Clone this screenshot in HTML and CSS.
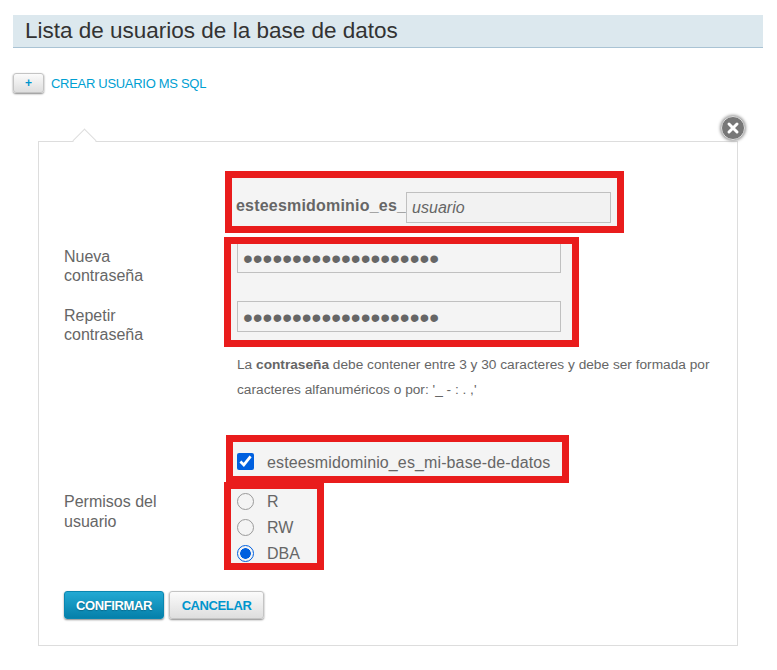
FILE: index.html
```html
<!DOCTYPE html>
<html lang="es">
<head>
    <meta charset="UTF-8">
    <meta name="viewport" content="width=device-width, initial-scale=1.0">
    <title>Lista de usuarios de la base de datos</title>
    <link rel="stylesheet" href="styles.css">
</head>
<body>
    <!-- Title bar -->
    <header class="page-title">
        <h1>Lista de usuarios de la base de datos</h1>
    </header>

    <!-- Create user link -->
    <div class="create-row">
        <button class="btn-add" type="button">+</button>
        <a class="create-link" href="#">CREAR USUARIO MS SQL</a>
    </div>

    <!-- User form -->
    <form class="user-card">
        <span class="card-arrow"></span>
        <button class="card-close" type="button" aria-label="Cerrar">
            <svg width="14" height="14" viewBox="0 0 14 14">
                <path d="M3 3 L11 11 M11 3 L3 11" stroke="#fff" stroke-width="3" stroke-linecap="round"/>
            </svg>
        </button>

        <div class="mark mark-user">
            <strong class="user-prefix">esteesmidominio_es_</strong>
            <input class="field field-user" type="text" placeholder="usuario">
        </div>

        <div class="row">
            <div class="pass-labels">
                <label>Nueva contraseña</label>
                <label>Repetir contraseña</label>
            </div>
            <div class="mark mark-pass">
                <input class="field field-pass" type="password" value="contrasena-de-prueba">
                <input class="field field-pass" type="password" value="contrasena-de-prueba">
            </div>
        </div>

        <p class="help">La <strong>contraseña</strong> debe contener entre 3 y 30 caracteres y debe ser formada por caracteres alfanuméricos o por: '_ - : . ,'</p>

        <label class="mark mark-db">
            <input type="checkbox" checked>
            <span>esteesmidominio_es_mi-base-de-datos</span>
        </label>

        <div class="row row-perm">
            <div class="perm-label">Permisos del usuario</div>
            <div class="mark mark-perm">
                <label class="perm"><input type="radio" name="perm"><span>R</span></label>
                <label class="perm"><input type="radio" name="perm"><span>RW</span></label>
                <label class="perm"><input type="radio" name="perm" checked><span>DBA</span></label>
            </div>
        </div>

        <div class="actions">
            <button class="btn btn-primary" type="button">CONFIRMAR</button>
            <button class="btn btn-cancel" type="button">CANCELAR</button>
        </div>
    </form>
</body>
</html>
```
FILE: styles.css
```css
/* Global Reset */
* {
    margin: 0;
    padding: 0;
    box-sizing: border-box;
}

body {
    font-family: "Liberation Sans", Arial, sans-serif;
    color: #666;
    background: #fff;
    padding: 15px 14px 0 13px;
}

/* Title bar */
.page-title {
    height: 33px;
    background: #dce8ee;
    border-bottom: 1px solid #a9c3d4;
    padding-left: 12px;
}

.page-title h1 {
    font-size: 22.5px;
    font-weight: normal;
    line-height: 31px;
    color: #333;
}

/* Create user link */
.create-row {
    display: flex;
    align-items: center;
    gap: 7px;
    margin-top: 25px;
}

.btn-add {
    width: 31px;
    height: 20px;
    font-family: inherit;
    font-size: 12px;
    font-weight: bold;
    line-height: 16px;
    color: #0095cd;
    background: linear-gradient(#fbfbfb, #dedede);
    border: 1px solid #c4c4c4;
    border-radius: 3px;
    box-shadow: 0 1px 2px #888;
}

.create-link {
    font-size: 13px;
    letter-spacing: -0.3px;
    color: #00a0d2;
    text-decoration: none;
}

/* User form card */
.user-card {
    position: relative;
    width: 700px;
    margin: 48px 0 0 25px;
    padding: 29px 25px 26px;
    border: 1px solid #ddd;
}

.card-arrow {
    position: absolute;
    top: -10px;
    left: 37px;
    width: 17px;
    height: 17px;
    background: #fff;
    border-top: 1px solid #ddd;
    border-left: 1px solid #ddd;
    transform: rotate(45deg);
}

.card-close {
    position: absolute;
    top: -26px;
    right: -8px;
    width: 24px;
    height: 24px;
    display: flex;
    align-items: center;
    justify-content: center;
    background: #777;
    border: 1.5px solid #ddd;
    border-radius: 50%;
    box-shadow: 0 0 3px 1px #999;
}

/* Red highlight boxes */
.mark {
    border: 7px solid #e91c1c;
    background: #f4f4f4;
}

.mark-user {
    display: flex;
    align-items: center;
    width: 399px;
    height: 62px;
    margin-left: 161px;
    padding: 11px 6px 0 4px;
}

.user-prefix {
    margin-bottom: 4px;
    font-size: 16px;
    line-height: 31px;
    letter-spacing: 0.2px;
    white-space: nowrap;
}

.field {
    height: 31px;
    font-family: inherit;
    color: #666;
    background: #f4f4f4;
    border: 1px solid #c0c0c0;
    outline: none;
}

.field-user {
    flex: 1;
    min-width: 0;
    padding: 0 5px;
    font-size: 16px;
    font-style: italic;
    background: #f2f2f2;
}

.field-user::placeholder {
    color: #666;
    opacity: 1;
}

.row {
    display: flex;
}

.pass-labels {
    width: 160px;
    padding-top: 14px;
    font-size: 16px;
    line-height: 19px;
}

.pass-labels label {
    display: block;
    width: 90px;
}

.pass-labels label + label {
    margin-top: 21px;
}

.mark-pass {
    width: 355px;
    height: 110px;
    margin-top: 4px;
    padding: 0 11px 0 6px;
    overflow: hidden;
}

.field-pass {
    display: block;
    width: 324px;
    padding: 3px 5px 0;
    font-size: 28px;
}

.field-pass:first-child {
    margin-top: -2px;
    margin-bottom: 28px;
}

.help {
    margin: 5px 0 0 173px;
    font-size: 13.7px;
    line-height: 25px;
}

.mark-db {
    display: flex;
    align-items: center;
    gap: 13px;
    width: 343px;
    height: 48px;
    margin: 33px 0 0 162px;
    padding: 5px 0 0 4px;
    font-size: 16px;
    letter-spacing: 0.12px;
}

.mark-db span {
    padding-top: 3px;
}

.mark-db input {
    width: 17px;
    height: 17px;
    flex: none;
    accent-color: #0060df;
}

.row-perm {
    margin-top: -1px;
}

.perm-label {
    width: 160px;
    padding: 10px 60px 0 0;
    font-size: 16px;
    line-height: 20px;
}

.mark-perm {
    width: 100px;
    height: 88px;
    padding-left: 6px;
    font-size: 16px;
}

.perm {
    display: flex;
    align-items: center;
    gap: 13px;
    height: 26px;
}

.perm input {
    appearance: none;
    width: 17px;
    height: 17px;
    flex: none;
    margin-bottom: 2px;
    border: 1.5px solid #9a9a9a;
    border-radius: 50%;
}

.perm input:checked {
    border-color: #0060df;
    background: radial-gradient(circle, #0060df 0 5px, #f4f4f4 5.6px);
}

/* Buttons */
.actions {
    display: flex;
    gap: 5px;
    margin-top: 21px;
}

.btn {
    height: 28px;
    font-family: inherit;
    font-size: 13px;
    font-weight: bold;
    letter-spacing: -0.4px;
    border-radius: 3px;
}

.btn-primary {
    width: 100px;
    color: #fff;
    background: linear-gradient(#23a9d3, #0580aa);
    border: 1px solid #0a86b0;
    box-shadow: 0 1px 2px #888;
    text-shadow: 0 1px 1px #0a6a8c;
}

.btn-cancel {
    width: 95px;
    color: #0095cd;
    background: linear-gradient(#fbfbfb, #dedede);
    border: 1px solid #c4c4c4;
    box-shadow: 0 1px 2px #888;
}
```
